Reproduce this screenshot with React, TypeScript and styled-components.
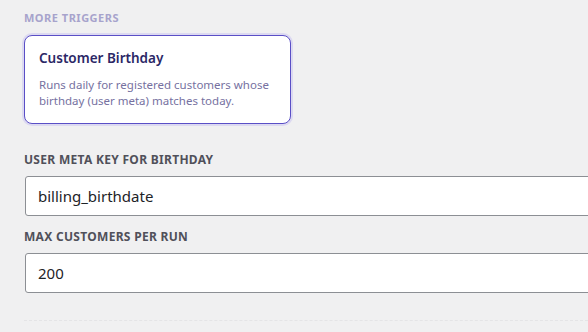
import React from 'react';
import styled, { createGlobalStyle } from 'styled-components';

const GlobalStyle = createGlobalStyle`
  html, body {
    margin: 0;
    padding: 0;
    background: #f0f0f1;
    overflow: hidden;
  }
  body {
    font-family: "Noto Sans", "Open Sans", sans-serif;
  }
`;

const Page = styled.div`
  padding: 10px 0 0 24px;
  width: 564px;
  overflow: hidden;
`;

const SectionTitle = styled.div`
  font-size: 11px;
  font-weight: 700;
  letter-spacing: 0.5px;
  color: #a7a3cc;
  text-transform: uppercase;
  line-height: 16px;
`;

const Card = styled.div<{ active?: boolean }>`
  box-sizing: border-box;
  width: 267px;
  margin-top: 9px;
  padding: 13px 14px 14px;
  background: #fff;
  border-radius: 8px;
  border: 1.5px solid ${({ active }) => (active ? '#5a4fc6' : '#dcdcde')};
  box-shadow: ${({ active }) => (active ? '0 0 0 2px #dcd9f1' : 'none')};
`;

const CardTitle = styled.div`
  font-size: 13.5px;
  font-weight: 600;
  color: #2b2766;
  line-height: 18px;
`;

const CardText = styled.div`
  margin-top: 10px;
  font-size: 11.5px;
  line-height: 16px;
  color: #76719f;
`;

const Field = styled.div`
  margin-top: 28px;

  & + & {
    margin-top: 13px;
  }
`;

const Label = styled.label`
  display: block;
  font-size: 12px;
  font-weight: 700;
  letter-spacing: 0.3px;
  color: #50505a;
  text-transform: uppercase;
  line-height: 16px;
  margin-bottom: 8px;
`;

const Input = styled.input`
  box-sizing: border-box;
  display: block;
  width: calc(100% + 20px);
  height: 40px;
  margin-left: 1px;
  padding: 0 12px;
  font-family: inherit;
  font-size: 15px;
  color: #1d2327;
  background: #fff;
  border: 1px solid #8c8f94;
  border-radius: 3px;
  outline: none;
`;

const Divider = styled.div`
  margin-top: 27px;
  border-top: 1px dashed #e4e4e6;
`;

export default function App() {
  return (
    <Page>
      <GlobalStyle />
      <SectionTitle>More triggers</SectionTitle>
      <Card active>
        <CardTitle>Customer Birthday</CardTitle>
        <CardText>
          Runs daily for registered customers whose birthday (user meta) matches today.
        </CardText>
      </Card>
      <Field>
        <Label>User meta key for birthday</Label>
        <Input defaultValue="billing_birthdate" />
      </Field>
      <Field>
        <Label>Max customers per run</Label>
        <Input defaultValue="200" />
      </Field>
      <Divider />
    </Page>
  );
}
